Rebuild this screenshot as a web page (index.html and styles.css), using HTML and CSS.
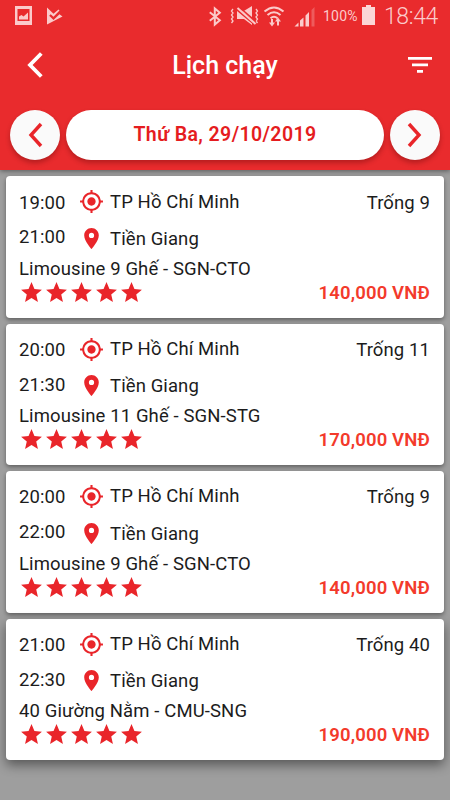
FILE: index.html
```html
<!DOCTYPE html>
<html lang="vi">
<head>
<meta charset="utf-8">
<title>Lịch chạy</title>
<link rel="stylesheet" href="styles.css">
</head>
<body>
<svg class="defs" aria-hidden="true">
  <symbol id="target" viewBox="0 0 24 24"><path d="M12 8c-2.21 0-4 1.79-4 4s1.79 4 4 4 4-1.79 4-4-1.79-4-4-4zm8.94 3A8.994 8.994 0 0 0 13 3.06V1h-2v2.06A8.994 8.994 0 0 0 3.06 11H1v2h2.06A8.994 8.994 0 0 0 11 20.94V23h2v-2.06A8.994 8.994 0 0 0 20.94 13H23v-2h-2.06zM12 19c-3.87 0-7-3.13-7-7s3.13-7 7-7 7 3.13 7 7-3.13 7-7 7z"/></symbol>
  <symbol id="pin" viewBox="0 0 24 24"><path d="M12 2C8.13 2 5 5.13 5 9c0 5.25 7 13 7 13s7-7.75 7-13c0-3.87-3.13-7-7-7zm0 9.500a2.500 2.500 0 0 1 0-5 2.500 2.500 0 0 1 0 5z"/></symbol>
  <symbol id="stars" viewBox="0 0 120 24">
    <path id="star" d="M12 17.27 18.180 21l-1.640-7.030L22 9.240l-7.190-.610L12 2 9.190 8.630 2 9.240l5.460 4.730L5.820 21z"/>
    <use href="#star" x="24"/><use href="#star" x="48"/><use href="#star" x="72"/><use href="#star" x="96"/>
  </symbol>
</svg>
<header class="top">
  <div class="status">
    <svg class="status-left" viewBox="0 0 50 20" width="50" height="20">
      <path fill-rule="evenodd" d="M0 1h17v19H0zM2.500 4v12h12V4z"/>
      <path d="M4 14.500v-3l2.500-1.500 2 1.500 4.500-4v7z"/>
      <path d="M32 2.500v17l15.500-8-3-2.200-6 5.700-4.300-4.300 1.500-1.500 2.800 2.600 6-6.300-1-1-5 4.200z"/>
    </svg>
    <svg class="status-right" viewBox="0 0 107 24" width="107" height="24">
      <path class="line" d="M1.800 8.200l10 8-5 4.300v-16l5 4.300-10 8"/>
      <path class="line thin" d="M25 5l-1.500 2 1.500 2-1.500 2 1.500 2-1.500 2 1.500 2-1.500 2M48 5l1.500 2-1.500 2 1.500 2-1.500 2 1.500 2-1.500 2 1.500 2"/>
      <path d="M29 7l15 12.500V21l-8-6h-7zM35 7.500l9-5.500v12.500z"/>
      <path class="cut" d="M31 3l17 14.500"/>
      <path class="line" d="M29.500 4l18 16"/>
      <path class="line" d="M56.500 7.500q9.500-8 19 0M59.500 11q6.500-5.500 13 0M62.500 14.300q3.500-3 7 0"/>
      <path d="M61 18.500h2v-3.500h2v3.500h2l-3 4zM67 17.500l3-4 3 4h-2v4h-2v-4z"/>
      <path d="M86.500 22.500l4-4v4zM92 16.500l3.500-3v9H92zM97.500 11.500l3.500-3.500v14.500h-3.500z"/>
      <path class="faint" d="M103.500 6l3-3v19.500h-3z"/>
    </svg>
    <span class="percent">100%</span>
    <svg class="battery" viewBox="0 0 13 20" width="13" height="20"><path d="M4 0h5v2h4v18H0V2h4z"/></svg>
    <span class="clock">18:44</span>
  </div>
  <div class="bar">
    <svg class="back" viewBox="0 0 16 26" width="16" height="26"><path d="M14.300 1.500 3 13l11.300 11.500"/></svg>
    <h1>Lịch chạy</h1>
    <svg class="filter" viewBox="0 0 24 16" width="24" height="16"><path d="M0 0h24v2.700H0zM4 6.500h16v2.700H4zM9 13h6v2.700H9z"/></svg>
  </div>
  <div class="dates">
    <button class="round"><svg viewBox="0 0 16 26" width="16" height="26"><path d="M14 2 4 13l10 11"/></svg></button>
    <button class="date">Thứ Ba, 29/10/2019</button>
    <button class="round"><svg viewBox="0 0 16 26" width="16" height="26"><path d="M2 2l10 11L2 24"/></svg></button>
  </div>
</header>
<main class="trips">
  <article class="trip">
    <div class="row from"><span class="time">19:00</span><svg class="icon"><use href="#target"/></svg><span class="place">TP Hồ Chí Minh</span><span class="seats">Trống 9</span></div>
    <div class="row to"><span class="time">21:00</span><svg class="icon"><use href="#pin"/></svg><span class="place">Tiền Giang</span></div>
    <div class="vehicle">Limousine 9 Ghế - SGN-CTO</div>
    <div class="foot"><svg class="rating"><use href="#stars"/></svg><strong class="price">140,000 VNĐ</strong></div>
  </article>
  <article class="trip">
    <div class="row from"><span class="time">20:00</span><svg class="icon"><use href="#target"/></svg><span class="place">TP Hồ Chí Minh</span><span class="seats">Trống 11</span></div>
    <div class="row to"><span class="time">21:30</span><svg class="icon"><use href="#pin"/></svg><span class="place">Tiền Giang</span></div>
    <div class="vehicle">Limousine 11 Ghế - SGN-STG</div>
    <div class="foot"><svg class="rating"><use href="#stars"/></svg><strong class="price">170,000 VNĐ</strong></div>
  </article>
  <article class="trip">
    <div class="row from"><span class="time">20:00</span><svg class="icon"><use href="#target"/></svg><span class="place">TP Hồ Chí Minh</span><span class="seats">Trống 9</span></div>
    <div class="row to"><span class="time">22:00</span><svg class="icon"><use href="#pin"/></svg><span class="place">Tiền Giang</span></div>
    <div class="vehicle">Limousine 9 Ghế - SGN-CTO</div>
    <div class="foot"><svg class="rating"><use href="#stars"/></svg><strong class="price">140,000 VNĐ</strong></div>
  </article>
  <article class="trip">
    <div class="row from"><span class="time">21:00</span><svg class="icon"><use href="#target"/></svg><span class="place">TP Hồ Chí Minh</span><span class="seats">Trống 40</span></div>
    <div class="row to"><span class="time">22:30</span><svg class="icon"><use href="#pin"/></svg><span class="place">Tiền Giang</span></div>
    <div class="vehicle">40 Giường Nằm - CMU-SNG</div>
    <div class="foot"><svg class="rating"><use href="#stars"/></svg><strong class="price">190,000 VNĐ</strong></div>
  </article>
</main>
</body>
</html>
```
FILE: styles.css
```css
* { box-sizing: border-box; }
body {
  margin: 0;
  height: 800px;
  overflow: hidden;
  background: #9e9e9e;
  font-family: Roboto, "Liberation Sans", sans-serif;
  font-size: 18.500px;
  line-height: 22px;
  color: #1c1c1c;
}
.defs { display: none; }
svg { display: block; flex: none; }
.top {
  height: 170px;
  background: #e92b2d;
  box-shadow: 0 1px 5px rgba(0, 0, 0, .45);
  color: #fff;
}
.status {
  display: flex;
  height: 30px;
  padding: 5px 0 0 15px;
  fill: #fbcaca;
  color: #fbcaca;
}
.status-right { margin: -1px 0 0 143px; }
.line { fill: none; stroke: #fbcaca; stroke-width: 2; }
.line.thin { stroke-width: 1.300; }
.cut { fill: none; stroke: #e92b2d; stroke-width: 1.500; }
.faint { opacity: .3; }
.percent { width: 35px; margin: 0 0 0 8px; font-size: 14px; font-weight: 400; letter-spacing: .2px; }
.battery { margin: 0 0 0 4px; fill: #fbd6d6; }
.clock { margin: 1px 0 0 9px; font-size: 23px; font-weight: 300; letter-spacing: -.4px; }
.bar {
  display: grid;
  grid-template-columns: 24px 1fr 24px;
  align-items: center;
  height: 70px;
  padding: 0 18px 0 27px;
}
.back { fill: none; stroke: #fff; stroke-width: 3.800; }
h1 { margin: 1px 0 0 -9px; text-align: center; font-size: 25px; line-height: 30px; font-weight: 500; }
.filter { fill: #fff; }
.dates { display: flex; gap: 6px; padding: 10px 10px 0; }
button {
  height: 50px;
  padding: 0;
  border: 0;
  border-radius: 25px;
  background: #fff;
  box-shadow: 0 3px 5px rgba(70, 0, 0, .32);
  color: #e51c20;
  font: 600 19.500px/22px Roboto, sans-serif;
  letter-spacing: .4px;
}
.round { display: flex; align-items: center; justify-content: center; width: 50px; background: #fafafa; }
.round path { fill: none; stroke: #e9252a; stroke-width: 3.400; }
.date { flex: 1; }
.trips { display: flex; flex-direction: column; gap: 6px; padding: 6.300px 6px; }
.trip {
  height: 141.450px;
  padding: 13px 14px 0 13px;
  border-radius: 4px;
  background: #fff;
  box-shadow: 0 2px 4px rgba(0, 0, 0, .4);
}
.trip:last-child { box-shadow: 0 5px 12px rgba(0, 0, 0, .45); }
.row { display: flex; align-items: flex-start; letter-spacing: .1px; }
.from { height: 36.700px; }
.to { height: 33px; }
.icon { width: 25px; height: 25px; fill: #e9252a; }
.time { width: 60px; margin-top: 2.300px; }
.to .time { margin-top: .5px; }
.place { margin: 1.300px 0 0 6px; }
.to .place { margin-top: 2px; }
.seats { margin: 2.300px 0 0 auto; }
.vehicle { letter-spacing: .11px; margin-top: -1px; }
.foot { display: flex; justify-content: space-between; }
.rating { width: 125px; height: 25px; fill: #e9252a; }
.price { margin-top: 2px; color: #f33a2b; font-weight: 600; font-size: 18.500px; letter-spacing: .15px; }
```
